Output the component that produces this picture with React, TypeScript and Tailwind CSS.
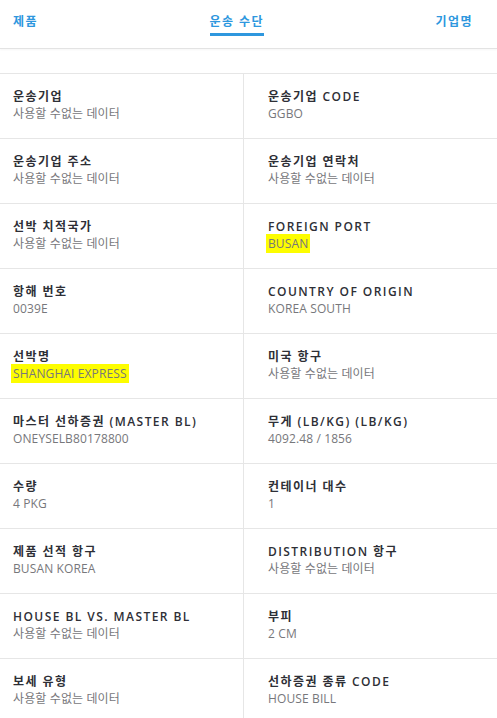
import type { ReactNode } from "react";

interface Field {
  label: string;
  value: string;
  highlight?: boolean;
}

const NA = "사용할 수없는 데이터";

const ROWS: [Field, Field][] = [
  [
    { label: "운송기업", value: NA },
    { label: "운송기업 CODE", value: "GGBO" },
  ],
  [
    { label: "운송기업 주소", value: NA },
    { label: "운송기업 연락처", value: NA },
  ],
  [
    { label: "선박 치적국가", value: NA },
    { label: "FOREIGN PORT", value: "BUSAN", highlight: true },
  ],
  [
    { label: "항해 번호", value: "0039E" },
    { label: "COUNTRY OF ORIGIN", value: "KOREA SOUTH" },
  ],
  [
    { label: "선박명", value: "SHANGHAI EXPRESS", highlight: true },
    { label: "미국 항구", value: NA },
  ],
  [
    { label: "마스터 선하증권 (MASTER BL)", value: "ONEYSELB80178800" },
    { label: "무게 (LB/KG) (LB/KG)", value: "4092.48 / 1856" },
  ],
  [
    { label: "수량", value: "4 PKG" },
    { label: "컨테이너 대수", value: "1" },
  ],
  [
    { label: "제품 선적 항구", value: "BUSAN KOREA" },
    { label: "DISTRIBUTION 항구", value: NA },
  ],
  [
    { label: "HOUSE BL VS. MASTER BL", value: NA },
    { label: "부피", value: "2 CM" },
  ],
  [
    { label: "보세 유형", value: NA },
    { label: "선하증권 종류 CODE", value: "HOUSE BILL" },
  ],
];

const font = "font-['Open_Sans','Noto_Sans_CJK_KR',sans-serif]";

function Cell({ field, right }: { field: Field; right?: boolean }) {
  return (
    <div className={`h-[64px] pt-[15px] ${right ? "pl-[24px]" : "pl-[13px] border-r border-[#e6e6e6]"}`}>
      <div className="text-[12px] leading-[16px] font-semibold tracking-[0.12em] text-[#2e2f36]">{field.label}</div>
      <div className="mt-[1px] text-[12px] leading-[16px] tracking-[0.01em] text-[#77777b]">
        {field.highlight ? <span className="bg-[#fdfd00] px-[2px] -mx-[2px] py-[1px]">{field.value}</span> : field.value}
      </div>
    </div>
  );
}

function Tab({ children, active }: { children: ReactNode; active?: boolean }) {
  return (
    <div className="relative h-[48px] flex items-start pt-[13px]">
      <span className="text-[12px] leading-[18px] font-semibold tracking-[0.12em] text-[#2e97de]">{children}</span>
      {active && <div className="absolute left-0 right-0 top-[33px] h-[3px] bg-[#2e97de]" />}
    </div>
  );
}

export default function App() {
  return (
    <div className={`w-[497px] h-[718px] overflow-hidden bg-white ${font}`}>
      <div className="flex justify-between px-[13px] pr-[24px] border-b border-[#e3e3e3] shadow-[0_1px_2px_rgba(0,0,0,0.04)]">
        <Tab>제품</Tab>
        <Tab active>운송 수단</Tab>
        <Tab>기업명</Tab>
      </div>
      <div className="h-[24px]" />
      <div className="grid grid-cols-[244px_1fr] border-t border-[#e6e6e6]">
        {ROWS.map(([a, b], i) => (
          <div key={i} className="contents">
            <div className="border-b border-[#e6e6e6]">
              <Cell field={a} />
            </div>
            <div className="border-b border-[#e6e6e6]">
              <Cell field={b} right />
            </div>
          </div>
        ))}
      </div>
    </div>
  );
}
